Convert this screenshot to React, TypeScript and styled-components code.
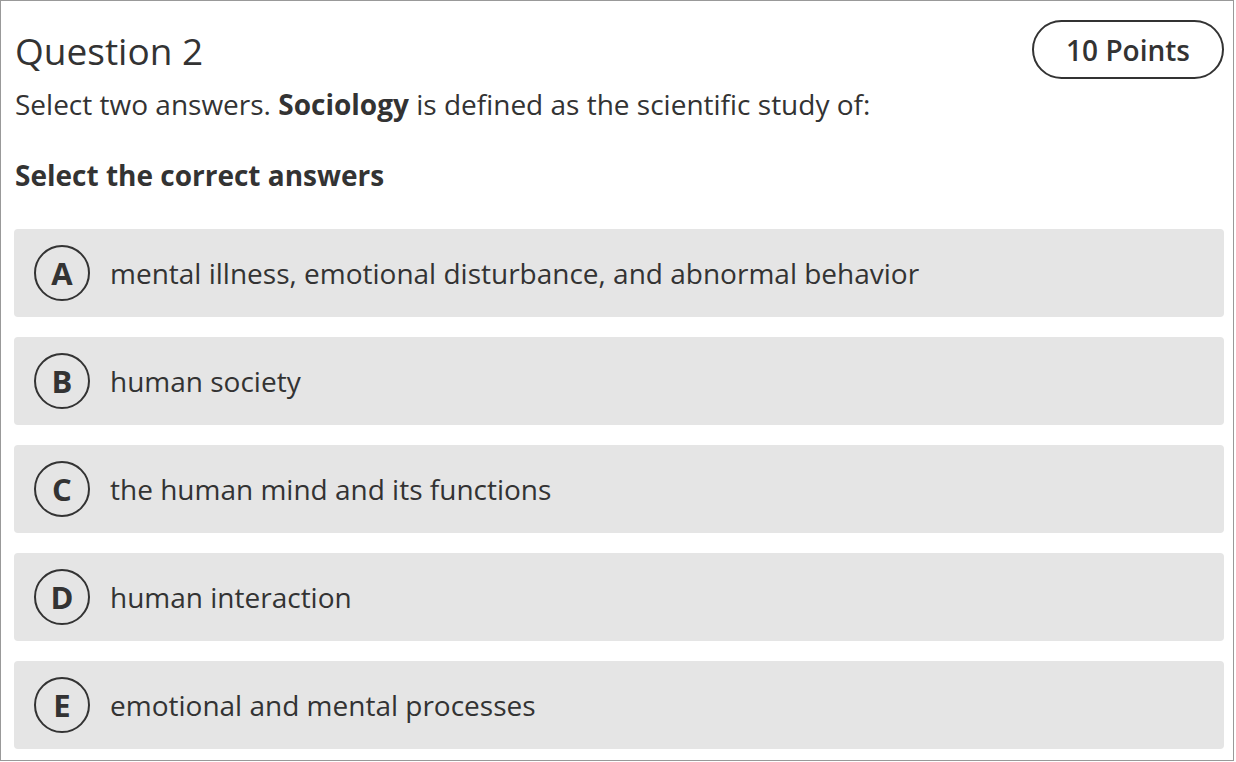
import React from "react";
import styled, { createGlobalStyle } from "styled-components";

const Global = createGlobalStyle`
  html, body { margin: 0; padding: 0; background: #fff; }
  body { font-family: "Open Sans", "Noto Sans", sans-serif; color: #333; }
`;

const Frame = styled.div`
  box-sizing: border-box;
  width: 1234px;
  height: 761px;
  border: 1px solid #999;
  padding: 19px 9px 0 13px;
`;

const Header = styled.div`
  display: flex;
  justify-content: space-between;
  align-items: flex-start;
`;

const Title = styled.h2`
  margin: 7px 0 0 1px;
  font-size: 37px;
  font-weight: 400;
  line-height: 48px;
`;

const Points = styled.div`
  box-sizing: border-box;
  height: 59px;
  padding: 0 32px;
  border: 2px solid #333;
  border-radius: 30px;
  display: flex;
  align-items: center;
  font-size: 28px;
  font-weight: 600;
`;

const Prompt = styled.p`
  margin: 7px 0 0 1px;
  font-size: 28px;
  line-height: 36px;
  b { font-weight: 700; }
`;

const Instruction = styled.h3`
  margin: 35px 0 0 1px;
  font-size: 28px;
  font-weight: 700;
  line-height: 36px;
`;

const Options = styled.div`
  margin-top: 36px;
  display: flex;
  flex-direction: column;
  gap: 20px;
`;

const Option = styled.div`
  height: 88px;
  box-sizing: border-box;
  background: #e5e5e5;
  border-radius: 4px;
  display: flex;
  align-items: center;
  padding-left: 20px;
  gap: 20px;
`;

const Letter = styled.span`
  box-sizing: border-box;
  width: 56px;
  height: 56px;
  border: 2px solid #333;
  border-radius: 50%;
  display: flex;
  align-items: center;
  justify-content: center;
  font-size: 31px;
  font-weight: 700;
  line-height: 1;
  flex-shrink: 0;
`;

const OptionText = styled.span`
  font-size: 28px;
`;

const options = [
  ["A", "mental illness, emotional disturbance, and abnormal behavior"],
  ["B", "human society"],
  ["C", "the human mind and its functions"],
  ["D", "human interaction"],
  ["E", "emotional and mental processes"],
];

export default function App() {
  return (
    <>
      <Global />
      <Frame>
        <Header>
          <Title>Question 2</Title>
          <Points>10 Points</Points>
        </Header>
        <Prompt>
          Select two answers. <b>Sociology</b> is defined as the scientific study of:
        </Prompt>
        <Instruction>Select the correct answers</Instruction>
        <Options>
          {options.map(([l, t]) => (
            <Option key={l}>
              <Letter>{l}</Letter>
              <OptionText>{t}</OptionText>
            </Option>
          ))}
        </Options>
      </Frame>
    </>
  );
}
